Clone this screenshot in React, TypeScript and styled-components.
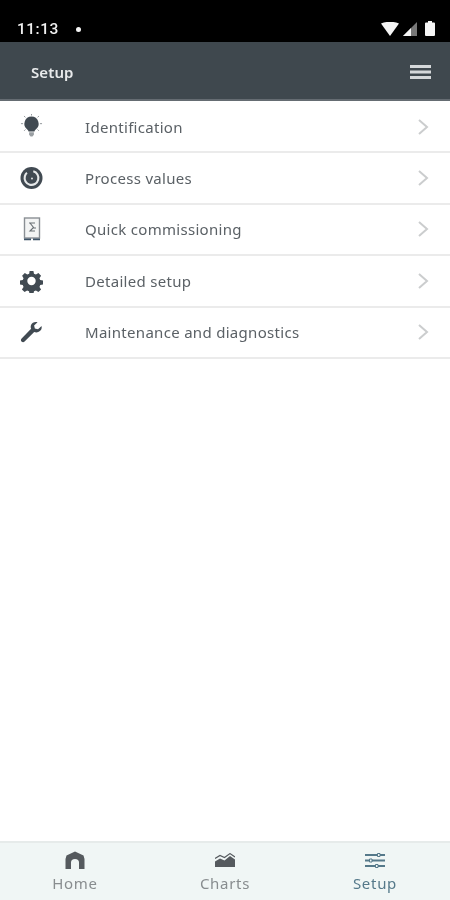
import React from "react";
import styled, { createGlobalStyle } from "styled-components";

const Global = createGlobalStyle`
  html, body { margin: 0; padding: 0; background: #fff; }
  #root { width: 450px; height: 900px; }
  * { box-sizing: border-box; }
`;

const Screen = styled.div`
  width: 450px;
  height: 900px;
  display: flex;
  flex-direction: column;
  background: #fff;
  font-family: "Noto Sans", "Open Sans", sans-serif;
  overflow: hidden;
  filter: blur(0.5px);
`;

const StatusBar = styled.div`
  height: 42px;
  flex: none;
  background: #000;
  color: #f0f0f0;
  display: flex;
  align-items: center;
  padding: 16px 15px 0 17px;
`;

const Clock = styled.span`
  font-family: "Roboto", sans-serif;
  font-size: 15.5px;
  font-weight: 500;
  letter-spacing: 0.5px;
  width: 59px;
`;

const Dot = styled.span`
  width: 5px;
  height: 5px;
  border-radius: 50%;
  background: #f5f5f5;
`;

const StatusIcons = styled.div`
  margin-left: auto;
  display: flex;
  align-items: center;
  gap: 4px;
  margin-top: -1px;
`;

const Battery = styled.svg`
  margin-left: 4px;
`;

const Header = styled.header`
  height: 59px;
  flex: none;
  background: #3f484e;
  border-bottom: 2px solid #656c72;
  display: flex;
  align-items: center;
  justify-content: space-between;
  padding: 3px 19px 0 31px;
  color: #e8eaeb;
`;

const Title = styled.h1`
  margin: 0;
  font-size: 15px;
  font-weight: 600;
  letter-spacing: 0.1px;
`;

const List = styled.ul`
  list-style: none;
  margin: 0;
  padding: 1px 0 0;
  flex: 1;
`;

const Row = styled.li`
  height: 51.4px;
  display: flex;
  align-items: center;
  padding: 0 21px 0 20px;
  border-bottom: 2px solid #ebebeb;
  color: #5b6166;
`;

const RowIcon = styled.span`
  width: 23px;
  height: 26px;
  display: flex;
  align-items: center;
  justify-content: center;
  margin-right: 42px;
  color: #414a52;
`;

const RowLabel = styled.span`
  flex: 1;
  font-size: 15px;
  letter-spacing: 0.3px;
`;

const Nav = styled.nav`
  height: 59px;
  flex: none;
  display: grid;
  grid-template-columns: repeat(3, 1fr);
  background: #f0f6f5;
  border-top: 2px solid #e6ebea;
`;

const NavItem = styled.div<{ $active?: boolean }>`
  display: flex;
  flex-direction: column;
  align-items: center;
  padding-top: 7px;
  color: ${(p) => (p.$active ? "#55798a" : "#888d8f")};
  font-size: 15px;
  letter-spacing: 0.7px;
  line-height: 20px;
`;

const NavIcon = styled.span<{ $active?: boolean }>`
  height: 20px;
  margin-bottom: 3px;
  display: flex;
  align-items: center;
  color: ${(p) => (p.$active ? "#55798a" : "#555a5e")};
`;

const Chevron = () => (
  <svg width="12" height="16" viewBox="0 0 12 16" fill="none" stroke="#cbcdce" strokeWidth="2">
    <path d="M2 1l8 7-8 7" />
  </svg>
);

const Bulb = () => (
  <svg width="24" height="26" viewBox="0 2 24 26" fill="currentColor">
    <path d="M12 4a7.500 7.500 0 0 0-4.400 13.500c.8.700 1.300 1.400 1.300 2.300h6.200c0-.9.500-1.600 1.300-2.300A7.500 7.500 0 0 0 12 4z" />
    <path d="M9.500 20.500h5v2.500L13 25h-2l-1.500-2z" fill="#9a9fa3" />
    <path d="M12 .8v2.200M4.200 3.500l1.500 1.500M19.800 3.500L18.300 5M1 11.500h2.200M20.800 11.500H23M4.300 19l1.400-1.400M19.700 19l-1.400-1.400" stroke="#8f9499" strokeWidth="1" fill="none" />
  </svg>
);

const Gauge = () => (
  <svg width="24" height="24" viewBox="0 0 24 24">
    <circle cx="12" cy="12" r="11.500" fill="currentColor" />
    <circle cx="12" cy="12" r="7.200" fill="none" stroke="#e6e8e9" strokeWidth="2.200" strokeDasharray="38 7.300" transform="rotate(-75 12 12)" />
    <circle cx="12.500" cy="12.500" r="3.500" fill="currentColor" />
    <path d="M8.500 6l4 6" stroke="currentColor" strokeWidth="2.200" />
    <circle cx="12.500" cy="12.500" r="1.100" fill="#d5d8da" />
  </svg>
);

const Device = () => (
  <svg width="18" height="24" viewBox="0 0 18 24" fill="none">
    <rect x="1.500" y="1" width="15" height="20" fill="#f3f4f4" stroke="#8a8f94" strokeWidth="1.400" />
    <path d="M6 6h6M7 6l3.500 4.500L7 14h5M10 11h3" stroke="#6a7075" strokeWidth="1.100" />
    <path d="M1 22.400h7M10 22.400h7" stroke="#3d5266" strokeWidth="1.800" />
  </svg>
);

const Gear = () => (
  <svg width="24" height="24" viewBox="0 0 24 24" fill="currentColor">
    <path
      fillRule="evenodd"
      d="M10 1.500h4l.6 3 2 .8 2.600-1.700 2.800 2.800-1.700 2.600.8 2 3 .6v4l-3 .6-.8 2 1.700 2.600-2.800 2.800-2.600-1.700-2 .8-.6 3h-4l-.6-3-2-.8-2.600 1.700-2.800-2.800 1.700-2.600-.8-2-3-.6v-4l3-.6.8-2L2.200 6.400 5 3.600l2.600 1.700 2-.8zM12 7.600a4.400 4.400 0 1 0 0 8.800 4.400 4.400 0 0 0 0-8.800z"
    />
  </svg>
);

const Wrench = () => (
  <svg width="24" height="24" viewBox="0 0 24 24" fill="currentColor">
    <path d="M22.500 5.800l-3.700 3.400-3.300-.9-.8-3.200L18.300 1.700c-2.800-.8-5.800.3-6.800 3-.5 1.400-.4 2.800.1 4L1.700 18.700c-1 1-1 2.400-.1 3.300.9.900 2.300.9 3.200 0l10-10c1.300.5 2.800.6 4.200.1 2.800-1 4.200-3.400 3.500-6.300z" />
  </svg>
);

const HomeIcon = () => (
  <svg width="20" height="18" viewBox="0 0 20 18" fill="currentColor">
    <path fillRule="evenodd" d="M10 .5L18.500 4.500 19.500 8V18h-5.500V11.500a4 3.500 0 0 0-8 0V18H.5V8L1.500 4.500z" />
  </svg>
);

const ChartIcon = () => (
  <svg width="20" height="14" viewBox="0 0 20 14" fill="currentColor">
    <path d="M0 14V8.500l5-3 4.500 2L15 3l5 3.500V14z" />
    <path d="M0 5.500L5 2.500l4.500 2L15 .6l5 3.400" fill="none" stroke="currentColor" strokeWidth="1.200" />
  </svg>
);

const SetupIcon = () => (
  <svg width="20" height="15" viewBox="0 0 20 15" fill="none" stroke="currentColor" strokeWidth="2">
    <path d="M0 2h12M15 2h5M0 7.500h4M7 7.500h13M0 13h10M13 13h7" />
    <path d="M12.500 .5h2.500v3h-2.500zM4.500 6h2.500v3H4.500zM10.500 11.500H13v3h-2.500z" strokeWidth="1" />
  </svg>
);

const rows = [
  { label: "Identification", icon: <Bulb /> },
  { label: "Process values", icon: <Gauge /> },
  { label: "Quick commissioning", icon: <Device /> },
  { label: "Detailed setup", icon: <Gear /> },
  { label: "Maintenance and diagnostics", icon: <Wrench /> },
];

export default function App() {
  return (
    <Screen>
      <Global />
      <StatusBar>
        <Clock>11:13</Clock>
        <Dot />
        <StatusIcons>
          <svg width="18" height="14" viewBox="0 0 18 14" fill="#f5f5f5">
            <path d="M0 1.500Q9-2 18 1.500L9 14z" />
          </svg>
          <svg width="14" height="14" viewBox="0 0 14 14">
            <path d="M14 0V14H0z" fill="#777" />
            <path d="M8 6V14H0z" fill="#f5f5f5" />
          </svg>
          <Battery width="10" height="15" viewBox="0 0 10 15" fill="#f5f5f5">
            <path d="M3 0h4v1.500H9a1 1 0 0 1 1 1V14a1 1 0 0 1-1 1H1a1 1 0 0 1-1-1V2.500a1 1 0 0 1 1-1h2z" />
          </Battery>
        </StatusIcons>
      </StatusBar>
      <Header>
        <Title>Setup</Title>
        <svg width="21" height="16" viewBox="0 0 21 16" fill="#d5d8da">
          <rect y="1" width="21" height="3" />
          <rect y="6.500" width="21" height="3" />
          <rect y="12" width="21" height="3" />
        </svg>
      </Header>
      <List>
        {rows.map((r) => (
          <Row key={r.label}>
            <RowIcon>{r.icon}</RowIcon>
            <RowLabel>{r.label}</RowLabel>
            <Chevron />
          </Row>
        ))}
      </List>
      <Nav>
        <NavItem>
          <NavIcon><HomeIcon /></NavIcon>
          Home
        </NavItem>
        <NavItem>
          <NavIcon><ChartIcon /></NavIcon>
          Charts
        </NavItem>
        <NavItem $active>
          <NavIcon $active><SetupIcon /></NavIcon>
          Setup
        </NavItem>
      </Nav>
    </Screen>
  );
}
